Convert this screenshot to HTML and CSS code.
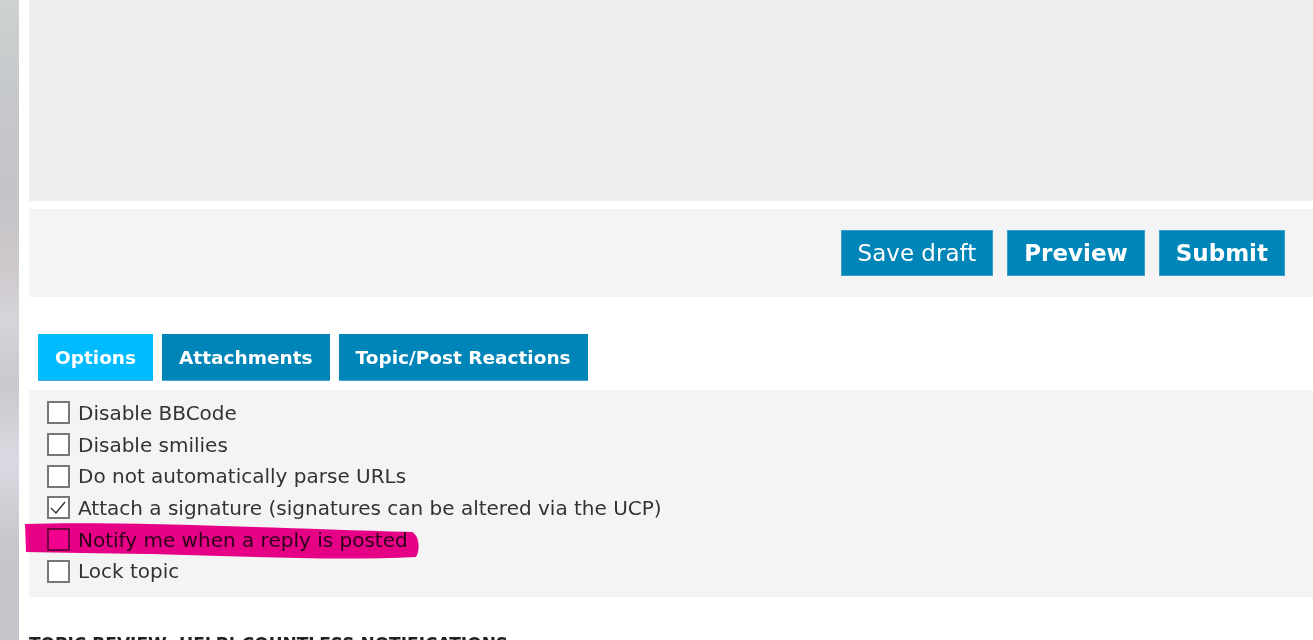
FILE: index.html
```html
<!DOCTYPE html>
<html lang="en">
<head>
    <meta charset="UTF-8">
    <meta name="viewport" content="width=device-width, initial-scale=1.0">
    <title>Post a reply</title>
    <link rel="stylesheet" href="styles.css">
</head>
<body>
    <div class="backdrop"></div>
    <div class="page">
        <div class="editor"></div>

        <div class="submit-buttons">
            <button class="button">Save draft</button>
            <button class="button bold">Preview</button>
            <button class="button bold">Submit</button>
        </div>

        <ul class="tabs">
            <li class="tab active">Options</li>
            <li class="tab">Attachments</li>
            <li class="tab">Topic/Post Reactions</li>
        </ul>

        <div class="options-panel">
            <label class="option"><span class="box"></span>Disable BBCode</label>
            <label class="option"><span class="box"></span>Disable smilies</label>
            <label class="option"><span class="box"></span>Do not automatically parse URLs</label>
            <label class="option">
                <span class="box">
                    <svg viewBox="0 0 22 22" width="22" height="22"><polyline points="4,11 9,16 18,5" fill="none" stroke="#333" stroke-width="1.4"/></svg>
                </span>Attach a signature (signatures can be altered via the UCP)
            </label>
            <label class="option"><span class="box"></span>Notify me when a reply is posted</label>
            <label class="option"><span class="box"></span>Lock topic</label>
        </div>

        <h3 class="review-title">Topic review: HELP! Countless notifications</h3>
    </div>

    <!-- marcador desenhado por cima da captura -->
    <svg class="marker" width="1313" height="640" viewBox="0 0 1313 640">
        <path d="M25,524 C110,521 250,527 412,532 C420,536 420,551 416,557 C330,561 240,556 150,554 C100,553 60,553 26,552 Z" fill="#f0008c"/>
    </svg>
</body>
</html>
```

FILE: styles.css
```css
body {
    margin: 0;
    display: flex;
    font-family: "DejaVu Sans", Verdana, sans-serif;
    color: #333;
    background-color: #fff;
    height: 640px;
    overflow: hidden;
}
.backdrop {
    width: 19px;
    flex-shrink: 0;
    background: linear-gradient(to bottom, #cdd3d0 0%, #c6c8cc 15%, #c3c4c8 30%, #cfc8cc 42%, #d4d5da 50%, #c8c9ce 60%, #dadbe2 72%, #c6c7cc 85%, #c4c5ca 100%);
}
.page {
    flex: 1;
    padding-left: 10px;
}
.editor {
    height: 201px;
    background-color: #eeeeee;
}
.submit-buttons {
    margin-top: 8px;
    height: 88px;
    background-color: #f4f4f4;
    display: flex;
    justify-content: flex-end;
    align-items: center;
    gap: 14px;
    padding-right: 28px;
}
.button {
    height: 46px;
    padding: 0 16px;
    font-family: inherit;
    font-size: 23px;
    color: #fff;
    background-color: #0085b8;
    border: 1px solid #3a9fc8;
    cursor: pointer;
}
.button.bold {
    font-weight: bold;
}
.tabs {
    list-style: none;
    margin: 37px 0 0 9px;
    padding: 0;
    display: flex;
    gap: 9px;
}
.tab {
    height: 47px;
    line-height: 47px;
    padding: 0 17px;
    font-size: 18.5px;
    font-weight: bold;
    color: #fff;
    background-color: #0085b8;
    border-bottom: 1px solid #4aa8d0;
    box-sizing: border-box;
}
.tab.active {
    background-color: #00bbff;
}
.options-panel {
    margin-top: 9px;
    height: 207px;
    box-sizing: border-box;
    padding: 7px 18px 0;
    background-color: #f4f4f4;
}
.option {
    display: flex;
    align-items: center;
    height: 31.7px;
    font-size: 20px;
    color: #333;
}
.box {
    width: 23px;
    height: 23px;
    box-sizing: border-box;
    border: 2px solid #777;
    background-color: #fff;
    margin-right: 8px;
    position: relative;
}
.box svg {
    position: absolute;
    left: -2px;
    top: -1px;
}
.review-title {
    margin: 37px 0 0;
    font-size: 17px;
    text-transform: uppercase;
    color: #222;
}
.marker {
    position: absolute;
    left: 0;
    top: 0;
    mix-blend-mode: multiply;
    pointer-events: none;
}
```
